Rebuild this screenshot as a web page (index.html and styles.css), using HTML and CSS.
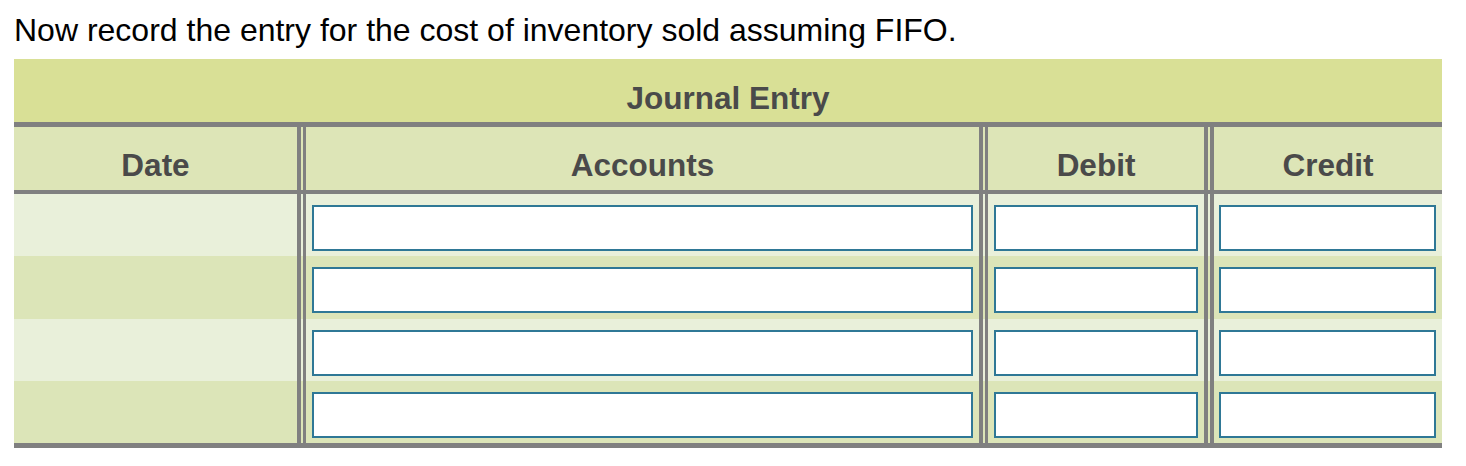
FILE: index.html
```html
<!DOCTYPE html>
<html lang="en">
<head>
<meta charset="utf-8">
<title>Journal Entry</title>
<link rel="stylesheet" href="styles.css">
</head>
<body>
<p class="prompt">Now record the entry for the cost of inventory sold assuming FIFO.</p>
<div class="journal">
  <div class="title">Journal Entry</div>
  <div class="grid head">
    <div class="cell c-date">Date</div>
    <div class="cell c-acct">Accounts</div>
    <div class="cell c-debit">Debit</div>
    <div class="cell c-credit">Credit</div>
  </div>
  <div class="body">
    <div class="grid row light">
      <div class="cell c-date"></div>
      <div class="cell c-acct"><input class="field" type="text"></div>
      <div class="cell c-debit"><input class="field" type="text"></div>
      <div class="cell c-credit"><input class="field" type="text"></div>
    </div>
    <div class="grid row dark">
      <div class="cell c-date"></div>
      <div class="cell c-acct"><input class="field" type="text"></div>
      <div class="cell c-debit"><input class="field" type="text"></div>
      <div class="cell c-credit"><input class="field" type="text"></div>
    </div>
    <div class="grid row light">
      <div class="cell c-date"></div>
      <div class="cell c-acct"><input class="field" type="text"></div>
      <div class="cell c-debit"><input class="field" type="text"></div>
      <div class="cell c-credit"><input class="field" type="text"></div>
    </div>
    <div class="grid row dark">
      <div class="cell c-date"></div>
      <div class="cell c-acct"><input class="field" type="text"></div>
      <div class="cell c-debit"><input class="field" type="text"></div>
      <div class="cell c-credit"><input class="field" type="text"></div>
    </div>
  </div>
</div>
</body>
</html>
```
FILE: styles.css
```css
html, body {
  margin: 0;
  padding: 0;
  background: #ffffff;
}
body {
  padding: 0 24px 0 14px;
  font-family: "Liberation Sans", Arial, Helvetica, sans-serif;
}
.prompt {
  margin: 0 0 12px 0;
  padding-top: 13px;
  font-size: 32px;
  line-height: 34px;
  color: #000000;
  height: 34px;
}
.journal {
  width: 1428px;
}
.title {
  box-sizing: border-box;
  height: 68px;
  padding-top: 21px;
  background: #d9e096;
  border-bottom: 5px solid #808080;
  text-align: center;
  font-weight: bold;
  font-size: 31.5px;
  line-height: 36px;
  color: #4a4a4a;
}
.grid {
  display: grid;
  grid-template-columns: 287px 680px 223px 232px;
  column-gap: 2px;
}
.head {
  box-sizing: border-box;
  height: 67px;
  background: #dde5b7;
  border-bottom: 4px solid #808080;
}
.head .cell {
  box-sizing: border-box;
  padding-top: 20px;
  text-align: center;
  font-weight: bold;
  font-size: 31.5px;
  line-height: 36px;
  color: #4a4a4a;
}
.body {
  border-bottom: 5px solid #808080;
}
.row {
  height: 62.25px;
}
.light {
  background: #e9f0da;
}
.dark {
  background: #dce5b8;
}
.cell {
  box-sizing: border-box;
  min-width: 0;
}
.row .cell {
  padding: 11px 6px 0 6px;
}
.c-date {
  border-right: 4px solid #808080;
}
.c-acct,
.c-debit {
  border-left: 3px solid #808080;
  border-right: 4px solid #808080;
}
.c-credit {
  border-left: 4px solid #808080;
}
.row .c-credit {
  padding-left: 5px;
}
.field {
  display: block;
  box-sizing: border-box;
  width: 100%;
  height: 46px;
  margin: 0;
  padding: 0 6px;
  border: 2px solid #2f7896;
  border-radius: 0;
  background: #ffffff;
  font-family: "Liberation Sans", Arial, sans-serif;
  font-size: 16px;
  outline: none;
}
```
